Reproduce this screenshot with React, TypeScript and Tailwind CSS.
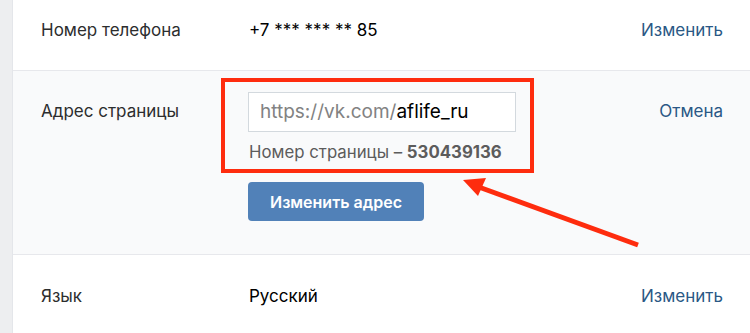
import React from "react";

export default function App() {
  const font = { fontFamily: 'Inter, "Liberation Sans", Arial, sans-serif' };
  return (
    <div className="relative flex w-[750px] h-[333px] overflow-hidden bg-white" style={font}>
      <div className="w-[13px] shrink-0 bg-[#edeef0] border-r border-[#e4e6ea]" />
      <div className="flex-1 flex flex-col">
        {/* Row 1 */}
        <div className="h-[71px] shrink-0 flex items-start pt-[20px] pl-[28px] pr-[27px] border-b border-[#e7e8ec] text-[17px] leading-[20px]">
          <div className="w-[208px] text-[#2c2d2e]">Номер телефона</div>
          <div className="flex-1 text-black">+7 *** *** ** 85</div>
          <div className="text-[#2a5885]">Изменить</div>
        </div>
        {/* Row 2 */}
        <div className="h-[184px] shrink-0 flex items-start pt-[21px] pl-[28px] pr-[27px] bg-[#f9fafb] border-b border-[#e7e8ec] text-[17px] leading-[20px]">
          <div className="w-[207px] pt-[9px] text-[#2c2d2e]">Адрес страницы</div>
          <div className="flex-1 flex flex-col items-start">
            <div className="w-[268px] h-[40px] flex items-center pl-[11px] bg-white border border-[#d3d9de] text-[19px]">
              <span className="text-[#828282]">https://vk.com/</span>
              <span className="text-black">aflife_ru</span>
            </div>
            <div className="mt-[10px] pl-px text-[16.8px] text-[#5c5c5c]">
              Номер страницы – <span className="font-bold">530439136</span>
            </div>
            <button className="mt-[20px] w-[176px] h-[39px] rounded-[4px] bg-[#5181b8] text-white text-[16px] font-semibold">
              Изменить адрес
            </button>
          </div>
          <div className="pt-[9px] text-[#2a5885]">Отмена</div>
        </div>
        {/* Row 3 */}
        <div className="flex-1 flex items-start pt-[31px] pl-[28px] pr-[27px] text-[17px] leading-[20px]">
          <div className="w-[208px] text-[#2c2d2e]">Язык</div>
          <div className="flex-1 text-black">Русский</div>
          <div className="text-[#2a5885]">Изменить</div>
        </div>
      </div>

      {/* Annotation overlay */}
      <div className="absolute left-[221px] top-[78px] w-[313px] h-[95px] border-4 border-[#fe2c0e] pointer-events-none" />
      <svg className="absolute left-0 top-0 pointer-events-none" width="750" height="333" viewBox="0 0 750 333">
        <line x1="638" y1="245" x2="476" y2="186" stroke="#fe2c0e" strokeWidth="5" strokeLinecap="butt" />
        <polygon points="463,180 486,178 478,196" fill="#fe2c0e" />
      </svg>
    </div>
  );
}
